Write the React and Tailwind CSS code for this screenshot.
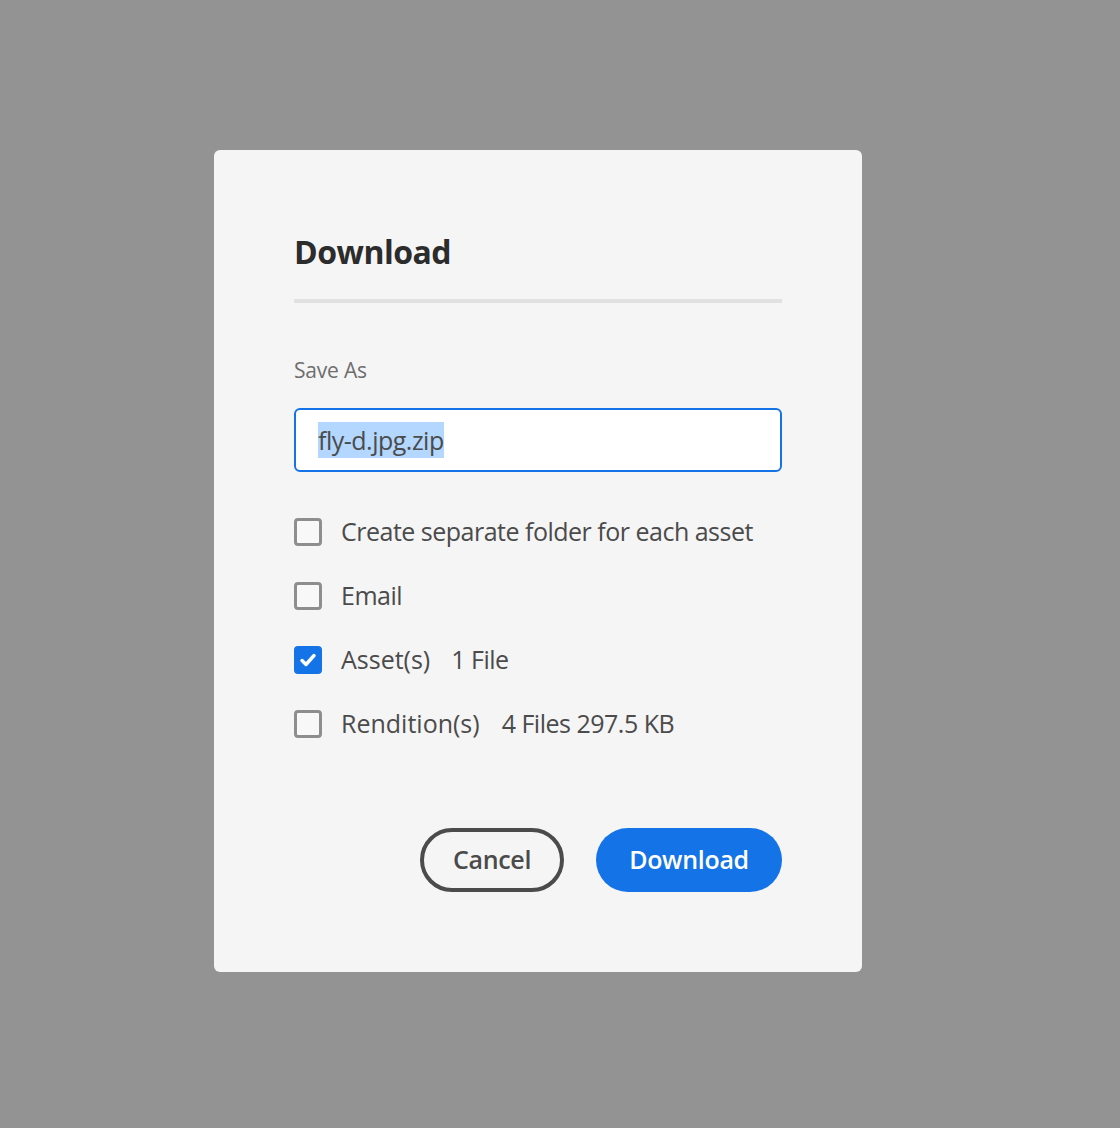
import { useState } from "react";

const font = { fontFamily: '"Open Sans", "Noto Sans", sans-serif' };

const Checkbox = ({ checked, onChange, children }) => (
  <label className="flex items-center h-16 cursor-pointer" onClick={onChange}>
    {checked ? (
      <span className="w-7 h-7 rounded-[4px] bg-[#1473e6] flex items-center justify-center">
        <svg width="20" height="20" viewBox="0 0 20 20" fill="none">
          <path d="M4 10.5l4 4 8-9" stroke="white" strokeWidth="3.4" strokeLinecap="round" strokeLinejoin="round" />
        </svg>
      </span>
    ) : (
      <span className="w-7 h-7 rounded-[4px] border-[3px] border-[#8e8e8e] bg-[#f8f8f8]"></span>
    )}
    <span className="ml-[19px] text-[25px] text-[#4b4b4b] tracking-[-0.5px]">{children}</span>
  </label>
);

const App = () => {
  const [opts, setOpts] = useState({ folder: false, email: false, assets: true, renditions: false });
  const toggle = (k) => setOpts((o) => ({ ...o, [k]: !o[k] }));

  return (
    <div className="min-h-screen w-full bg-[#939393] pt-[150px] pl-[214px]" style={font}>
      <div className="w-[648px] h-[822px] bg-[#f5f5f5] rounded-[6px] px-20 pt-[82px]">
        {/* Header */}
        <h1 className="text-[32px] font-bold text-[#2c2c2c] leading-[40px] tracking-[-0.5px]">Download</h1>
        <div className="h-1 bg-[#e1e1e1] mt-[27px]"></div>

        {/* Save As */}
        <div className="mt-[55px] text-[21px] text-[#6e6e6e] leading-6 tracking-[-0.2px]">Save As</div>
        <div className="mt-[26px] h-16 bg-white border-2 border-[#1473e6] rounded-[6px] flex items-center pl-[22px]">
          <span className="bg-[#b3d7fe] text-[25px] text-[#4b4b4b] leading-[36px] tracking-[-0.5px]">fly-d.jpg.zip</span>
        </div>

        {/* Options */}
        <div className="mt-7">
          <Checkbox checked={opts.folder} onChange={() => toggle("folder")}>Create separate folder for each asset</Checkbox>
          <Checkbox checked={opts.email} onChange={() => toggle("email")}>Email</Checkbox>
          <Checkbox checked={opts.assets} onChange={() => toggle("assets")}>
            <span className="tracking-[0px]">Asset(s)</span>
            <span className="ml-[21px]">1 File</span>
          </Checkbox>
          <Checkbox checked={opts.renditions} onChange={() => toggle("renditions")}>
            <span className="tracking-[0px]">Rendition(s)</span>
            <span className="ml-[22px]">4 Files 297.5 KB</span>
          </Checkbox>
        </div>

        {/* Actions */}
        <div className="flex justify-end gap-8 mt-[72px]">
          <button className="w-[144px] h-16 rounded-full border-[4px] border-[#4b4b4b] text-[25px] font-semibold text-[#4b4b4b] tracking-[-0.3px]">
            Cancel
          </button>
          <button className="w-[186px] h-16 rounded-full bg-[#1473e6] text-[25px] font-semibold text-white tracking-[-0.3px]">
            Download
          </button>
        </div>
      </div>
    </div>
  );
};

export default App;
